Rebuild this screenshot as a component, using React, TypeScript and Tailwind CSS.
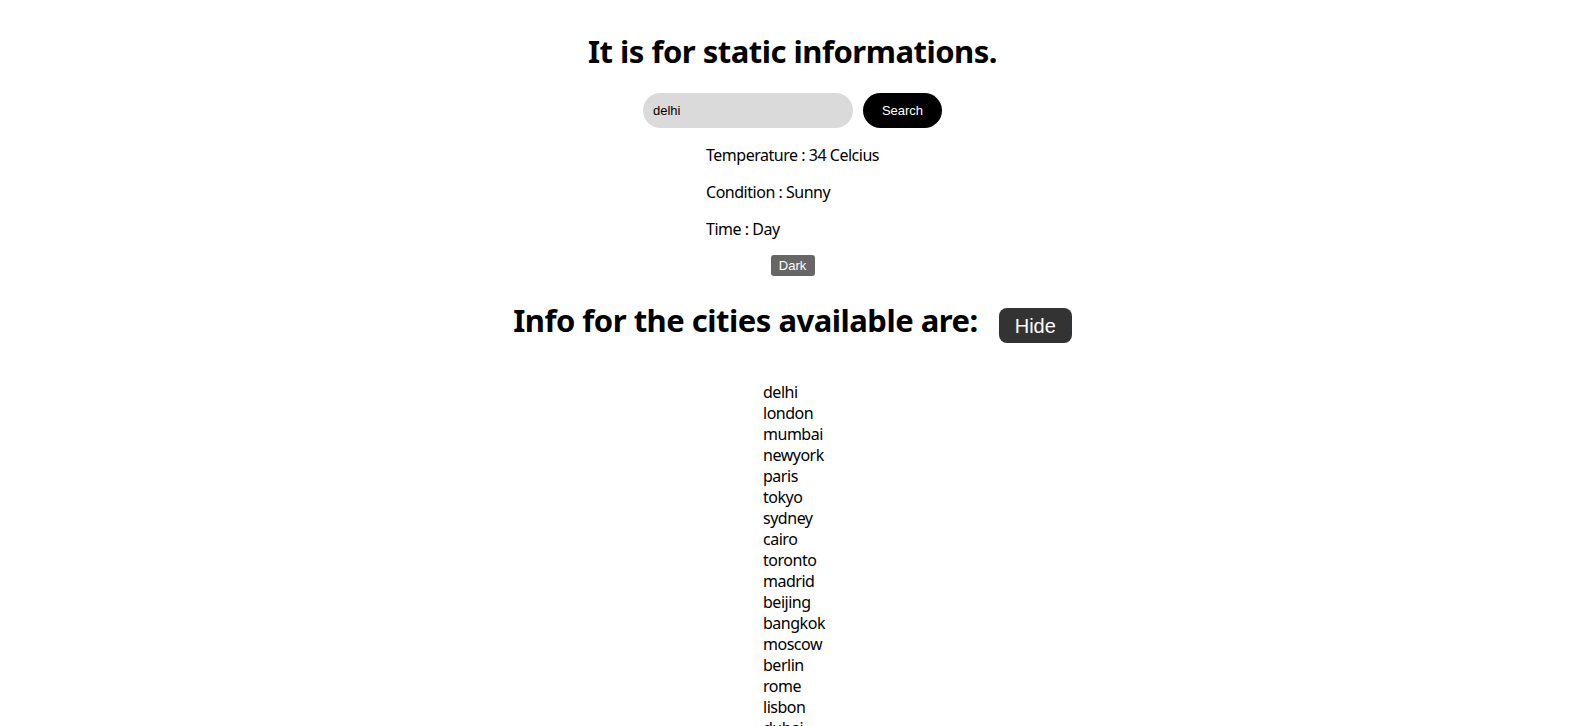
import { useState } from "react";

const cities = [
  "delhi",
  "london",
  "mumbai",
  "newyork",
  "paris",
  "tokyo",
  "sydney",
  "cairo",
  "toronto",
  "madrid",
  "beijing",
  "bangkok",
  "moscow",
  "berlin",
  "rome",
  "lisbon",
  "dubai",
  "seoul",
  "singapore",
];

const App = () => {
  const [city, setCity] = useState("delhi");
  const [showList, setShowList] = useState(true);

  return (
    <div className="w-full min-h-screen bg-white text-black pl-[5px] flex flex-col items-center font-['Noto_Sans',sans-serif] tracking-[-0.03em]">
      <h1 className="mt-[31px] text-[31px] leading-[40px] font-bold tracking-[-0.5px]">
        It is for static informations.
      </h1>

      <div className="mt-[22px] flex items-center gap-[10px] tracking-normal">
        <input
          type="text"
          value={city}
          onChange={(e) => setCity(e.target.value)}
          className="w-[210px] h-[35px] rounded-full bg-[#dadada] px-[10px] text-[13px] font-['Liberation_Sans',sans-serif] outline-none"
        />
        <button className="w-[79px] h-[35px] rounded-full bg-black text-white text-[13px] font-['Liberation_Sans',sans-serif] cursor-pointer">
          Search
        </button>
      </div>

      <div className="mt-[17px] w-[173px] flex flex-col gap-[16px] text-[16px] leading-[21px] whitespace-nowrap">
        <p>Temperature : 34 Celcius</p>
        <p>Condition : Sunny</p>
        <p>Time : Day</p>
      </div>

      <button className="mt-[15px] w-[44px] h-[21px] rounded-[3px] bg-[#666666] text-white text-[13px] leading-[21px] tracking-normal font-['Liberation_Sans',sans-serif] cursor-pointer">
        Dark
      </button>

      <div className="mt-[24px] flex items-start gap-[21px]">
        <h2 className="text-[31px] leading-[40px] font-bold tracking-[-0.5px]">
          Info for the cities available are:
        </h2>
        <button
          onClick={() => setShowList(!showList)}
          className="mt-[8px] w-[73px] h-[35px] rounded-[8px] bg-[#333333] text-white text-[20px] tracking-normal font-['Liberation_Sans',sans-serif] cursor-pointer"
        >
          {showList ? "Hide" : "Show"}
        </button>
      </div>

      {showList && (
        <ul className="mt-[39px] w-[59px] text-[16px] leading-[21px] whitespace-nowrap">
          {cities.map((c) => (
            <li key={c}>{c}</li>
          ))}
        </ul>
      )}
    </div>
  );
};

export default App;
